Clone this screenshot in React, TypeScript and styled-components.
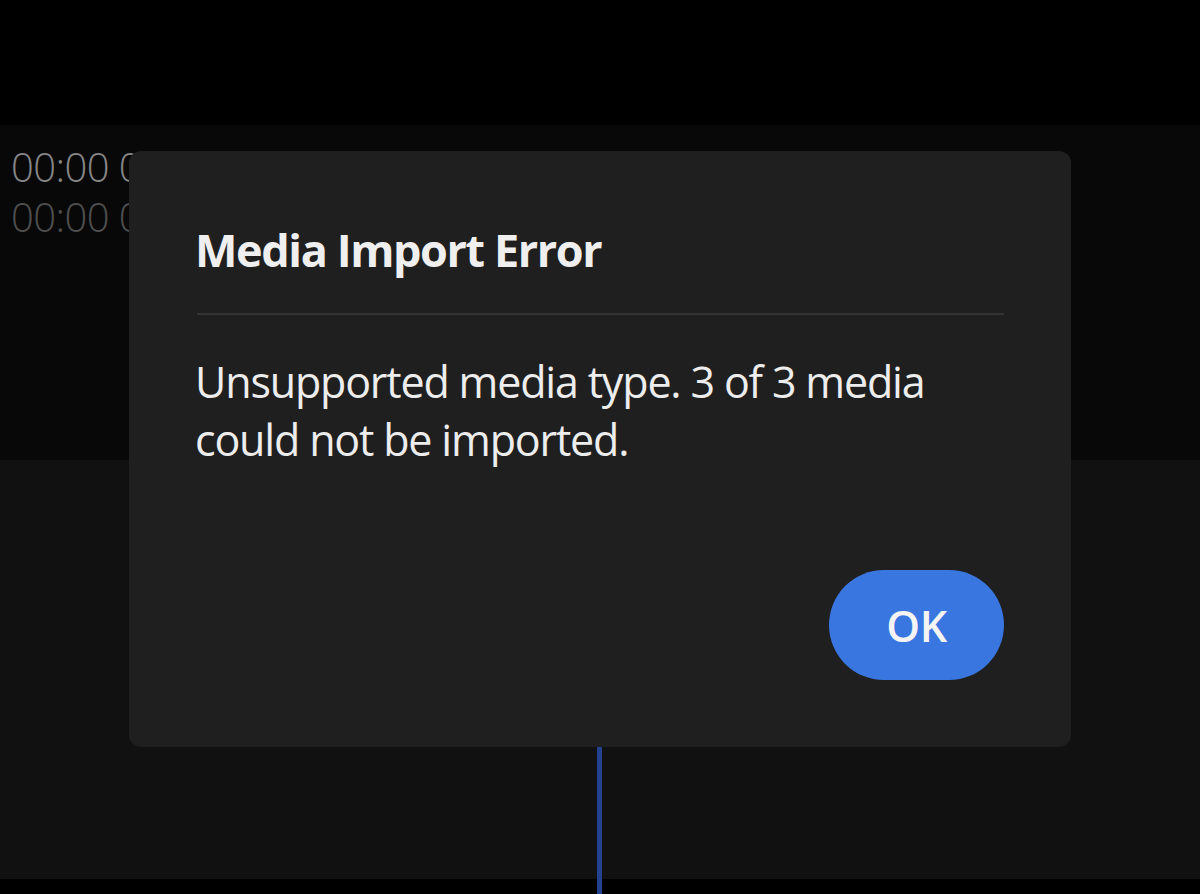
import React from "react";
import styled, { createGlobalStyle } from "styled-components";

const Global = createGlobalStyle`
  html, body { margin: 0; padding: 0; background: #000; }
  body { font-family: "Open Sans", "Noto Sans", sans-serif; }
  * { box-sizing: border-box; }
`;

const Page = styled.div`
  position: relative;
  width: 1200px;
  height: 894px;
  display: flex;
  flex-direction: column;
  overflow: hidden;
  background: #000;
`;

const TopBar = styled.div`
  height: 125px;
  background: #000;
`;

const TimePanel = styled.div`
  height: 335px;
  background: #080808;
  padding: 17px 0 0 11px;
  display: flex;
  flex-direction: column;
`;

const TimeLine = styled.div<{ $dim?: boolean }>`
  font-family: "Open Sans", sans-serif;
  font-weight: 300;
  font-size: 40px;
  line-height: 50px;
  letter-spacing: -0.6px;
  color: ${(p) => (p.$dim ? "#4f4f4f" : "#868686")};
  white-space: nowrap;
`;

const Timeline = styled.div`
  position: relative;
  flex: 1;
  background: #111111;
`;

const Playhead = styled.div`
  position: absolute;
  left: 597px;
  top: 0;
  bottom: 0;
  width: 5px;
  background: #22418e;
`;

const BottomBar = styled.div`
  height: 15px;
  background: #000;
  position: relative;
`;

const Dialog = styled.div`
  position: absolute;
  left: 129px;
  top: 151px;
  width: 942px;
  height: 596px;
  background: #1f1f1f;
  border-radius: 12px;
  padding: 71px 67px 67px 66px;
  display: flex;
  flex-direction: column;
`;

const Title = styled.h2`
  margin: 0;
  font-family: "Open Sans", sans-serif;
  font-weight: 700;
  font-size: 45px;
  line-height: 56px;
  letter-spacing: -1.4px;
  color: #efefef;
`;

const Divider = styled.hr`
  margin: 35px 0 0 2px;
  border: none;
  height: 2px;
  background: #333333;
`;

const Body = styled.p`
  margin: 38px 0 0 0;
  font-family: "Open Sans", sans-serif;
  font-weight: 400;
  font-size: 43px;
  line-height: 58px;
  letter-spacing: -1.17px;
  color: #ededed;
`;

const Actions = styled.div`
  margin-top: auto;
  display: flex;
  justify-content: flex-end;
`;

const Button = styled.button`
  width: 175px;
  height: 110px;
  border: none;
  border-radius: 55px;
  background: #3a76e0;
  color: #f4f4f4;
  font-family: "Open Sans", sans-serif;
  font-weight: 600;
  font-size: 43px;
  letter-spacing: -0.5px;
  padding: 0;
  cursor: pointer;
`;

export default function App() {
  return (
    <>
      <Global />
      <Page>
        <TopBar />
        <TimePanel>
          <TimeLine>00:00 00:00</TimeLine>
          <TimeLine $dim>00:00 00:00</TimeLine>
        </TimePanel>
        <Timeline>
          <Playhead />
        </Timeline>
        <BottomBar>
          <Playhead />
        </BottomBar>
        <Dialog role="dialog">
          <Title>Media Import Error</Title>
          <Divider />
          <Body>
            Unsupported media type. 3 of 3 media
            <br />
            could not be imported.
          </Body>
          <Actions>
            <Button>OK</Button>
          </Actions>
        </Dialog>
      </Page>
    </>
  );
}
